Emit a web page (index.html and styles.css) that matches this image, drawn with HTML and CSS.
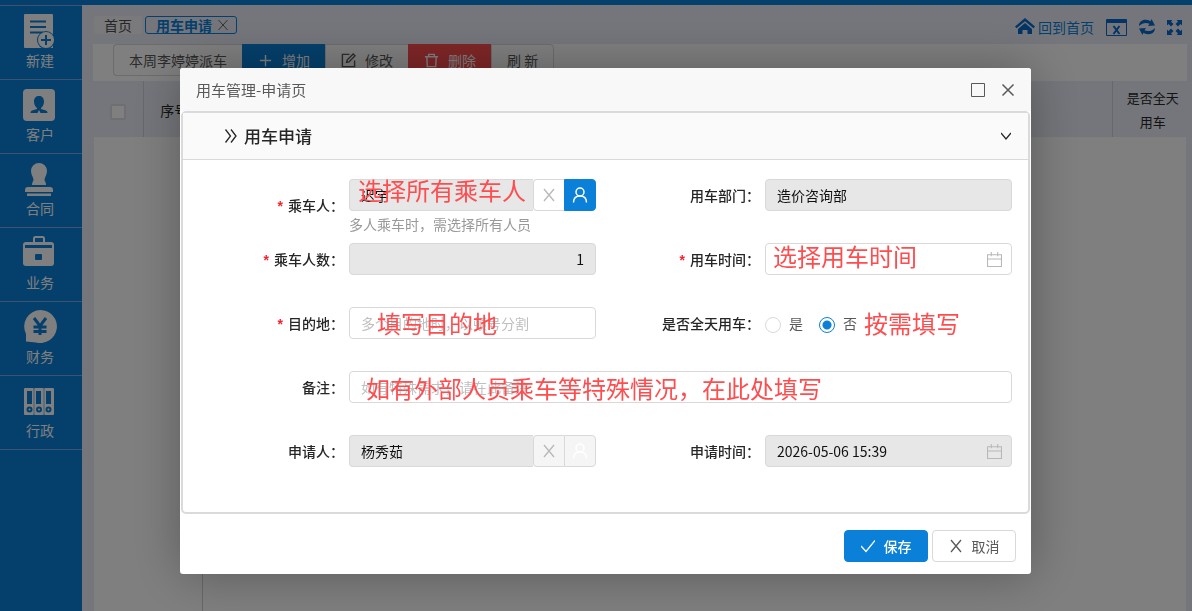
FILE: index.html
```html
<!DOCTYPE html>
<html lang="zh-CN">
<head>
    <meta charset="UTF-8">
    <title>用车管理-申请页</title>
    <link rel="stylesheet" href="styles.css">
</head>
<body>
    <div class="app">
        <div class="topbar"></div>
        <div class="app-body">
            <nav class="sidebar">
                <a class="side-item" href="#new">
                    <svg viewBox="0 0 34 34">
                        <path class="fill" d="M2 0h27a1 1 0 0 1 1 1v33H2a1 1 0 0 1-1-1V1a1 1 0 0 1 1-1z"/>
                        <path class="cut-line" d="M7 7.500h16M7 13h16M7 18.500h13"/>
                        <circle class="cut" cx="23" cy="26" r="9"/>
                        <circle class="fill" cx="23" cy="26" r="8"/>
                        <path class="cut-line" d="M18 26h10M23 21v10"/>
                    </svg>
                    <span>新建</span>
                </a>
                <a class="side-item" href="#customer">
                    <svg viewBox="0 0 34 34">
                        <rect class="fill" x="0" y="1" width="32" height="32" rx="4"/>
                        <path class="cut" d="M16 8c3 0 5 2 5 5.500 0 3-1.500 5.500-3 6.500v1l5 1.500c1 .5 1.500 1.500 1.500 2.500h-7l-1.500-3-1.500 3h-7c0-1 .5-2 1.500-2.500l5-1.500v-1c-1.500-1-3-3.500-3-6.500C11 10 13 8 16 8z"/>
                    </svg>
                    <span>客户</span>
                </a>
                <a class="side-item" href="#contract">
                    <svg viewBox="0 0 34 34">
                        <path class="fill" d="M16 1a8 8 0 0 1 8 8c0 4-2.500 6-2.500 9 0 1 1.500 2 1.500 5H9c0-3 1.500-4 1.500-5 0-3-2.500-5-2.500-9a8 8 0 0 1 8-8z"/>
                        <path class="fill" d="M5 25h22a3 3 0 0 1 3 3v2H2v-2a3 3 0 0 1 3-3zM4 31.500h24v2.500H4z"/>
                    </svg>
                    <span>合同</span>
                </a>
                <a class="side-item" href="#business">
                    <svg viewBox="0 0 34 34">
                        <path class="edge" d="M11 6V2.500a1.500 1.500 0 0 1 1.500-1.500h7A1.500 1.500 0 0 1 21 2.500V6"/>
                        <rect class="fill" x="0" y="6" width="31" height="24" rx="3"/>
                        <path class="cut" d="M2 9h27v3H2z"/>
                        <rect class="cut" x="12" y="18" width="7" height="6" rx="1"/>
                    </svg>
                    <span>业务</span>
                </a>
                <a class="side-item" href="#finance">
                    <svg viewBox="0 0 34 34">
                        <path class="fill" d="M17.500 0a16.500 16.500 0 1 1-4.500 32.400L3 31.500V24A16.500 16.500 0 0 1 17.500 0z"/>
                        <path class="cut-line bold" d="M11 8l6 8 6-8M17 16v9M10.500 17h13M10.500 21.500h13"/>
                    </svg>
                    <span>财务</span>
                </a>
                <a class="side-item" href="#admin">
                    <svg viewBox="0 0 34 34">
                        <rect class="fill" x="1" y="4" width="10" height="27" rx="1"/>
                        <rect class="fill" x="11" y="4" width="10" height="27" rx="1"/>
                        <rect class="fill" x="21" y="4" width="10" height="27" rx="1"/>
                        <path class="cut" d="M4 7h5v13H4zM13 7h5v13h-5zM23 7h5v13h-5z"/>
                        <path class="cut-line thin" d="M11 4v27M21 4v27"/>
                        <circle class="cut-line" cx="6.500" cy="25.500" r="2"/>
                        <circle class="cut-line" cx="16" cy="25.500" r="2"/>
                        <circle class="cut-line" cx="25.500" cy="25.500" r="2"/>
                    </svg>
                    <span>行政</span>
                </a>
            </nav>

            <main class="workspace">
                <header class="tab-row">
                    <div class="tabs">
                        <a class="tab" href="#home">首页</a>
                        <a class="tab active" href="#car">用车申请
                            <svg class="tab-close" viewBox="0 0 12 12"><path d="M1.500 1l9 10M10.500 1l-9 10"/></svg>
                        </a>
                    </div>
                    <div class="quick-links">
                        <a href="#home">
                            <svg class="home" viewBox="0 0 20 18">
                                <path d="M10 0l10 8.500-1.500 1.700L10 3.200 1.500 10.200 0 8.500z"/>
                                <path d="M10 5l7 6v5h-4.500v-4h-5v4H3v-5z"/>
                            </svg>
                            回到首页
                        </a>
                        <button type="button" aria-label="关闭页面">
                            <svg class="window" viewBox="0 0 21 17">
                                <path fill-rule="evenodd" d="M1 0h19a1 1 0 0 1 1 1v15a1 1 0 0 1-1 1H1a1 1 0 0 1-1-1V1a1 1 0 0 1 1-1zM1 4v12h19V4z"/>
                                <path class="stroke" d="M7.500 7l6 8M13.500 7l-6 8"/>
                            </svg>
                        </button>
                        <button type="button" aria-label="刷新页面">
                            <svg class="sync" viewBox="0 0 16 16">
                                <path d="M0 7C0 3 3 .5 7 .8c2 .1 3.500.7 4.500 1.400L12.500 0 16 6.500 9 7l1.500-2.300C7.500 3.300 3.500 3.500 0 7zM16 9c0 4-3 6.500-7 6.200-2-.1-3.500-.7-4.500-1.400L3.500 16 0 9.500 7 9l-1.500 2.300C8.500 12.700 12.500 12.500 16 9z"/>
                            </svg>
                        </button>
                        <button type="button" aria-label="全屏">
                            <svg class="full" viewBox="0 0 15 15">
                                <path d="M0 0h5.500L4 1.500l2.500 2.500L4 6.500 1.500 4 0 5.500zM15 0v5.500L13.500 4 11 6.500 8.500 4 11 1.500 9.500 0zM0 15V9.500L1.500 11 4 8.500 6.500 11 4 13.500 5.500 15zM15 15H9.500l1.500-1.500L8.500 11 11 8.500l2.500 2.500L15 9.500z"/>
                            </svg>
                        </button>
                    </div>
                </header>

                <div class="toolbar">
                    <button type="button" class="tool">本周李婷婷派车</button>
                    <button type="button" class="tool blue">
                        <svg viewBox="0 0 16 16"><path d="M2 8h12M8 2v12"/></svg>增加
                    </button>
                    <button type="button" class="tool">
                        <svg viewBox="0 0 16 16"><path d="M9 1.500H1.500v13h13V8M6 10l.5-2.500L13 1l2 2-6.500 6.500z"/></svg>修改
                    </button>
                    <button type="button" class="tool red">
                        <svg viewBox="0 0 16 16"><path d="M1 4h14M3 4l.5 10.500h9L13 4M5 4V1.500h6V4"/></svg>删除
                    </button>
                    <button type="button" class="tool last">刷 新</button>
                </div>

                <table class="grid">
                    <thead>
                        <tr>
                            <th class="check-col"><input type="checkbox" aria-label="全选"></th>
                            <th class="index-col">序号</th>
                            <th></th>
                            <th class="day-col">是否全天用车</th>
                        </tr>
                    </thead>
                </table>
                <div class="grid-body"><div class="fixed-col"></div></div>
            </main>
        </div>
    </div>

    <div class="mask">
        <form class="modal" role="dialog" aria-labelledby="modalTitle">
            <header class="modal-head">
                <h1 id="modalTitle">用车管理-申请页</h1>
                <button type="button" aria-label="最大化">
                    <svg viewBox="0 0 14 14"><path d="M.5.500h13v13H.500z"/></svg>
                </button>
                <button type="button" aria-label="关闭">
                    <svg viewBox="0 0 14 14"><path class="heavy" d="M1.500 1.500l11 11M12.500 1.500l-11 11"/></svg>
                </button>
            </header>

            <section class="panel">
                <header class="panel-head">
                    <svg class="chevrons" viewBox="0 0 14 14"><path d="M1.500 .500l5 6.500-5 6.500M7 .500l5 6.500-5 6.500"/></svg>
                    <h2>用车申请</h2>
                    <button type="button" aria-label="收起">
                        <svg viewBox="0 0 10 10"><path d="M0 2l5 6 5-6"/></svg>
                    </button>
                </header>

                <div class="form-grid">
                    <label class="label required with-help" for="rider">乘车人：</label>
                    <div class="field">
                        <div class="picker">
                            <input class="input" id="rider" type="text" value="迟宇" readonly>
                            <button type="button" class="clear" aria-label="清除乘车人">
                                <svg viewBox="0 0 12 14"><path d="M1 1l10 12M11 1L1 13"/></svg>
                            </button>
                            <button type="button" class="choose" aria-label="选择乘车人">
                                <svg viewBox="0 0 16 16"><circle cx="8" cy="5" r="4"/><path d="M1.500 15.500C1.500 11.500 4 9 8 9s6.500 2.500 6.500 6.500"/></svg>
                            </button>
                        </div>
                        <p class="help">多人乘车时，需选择所有人员</p>
                        <span class="note note-rider">选择所有乘车人</span>
                    </div>

                    <label class="label" for="dept">用车部门：</label>
                    <div class="field">
                        <input class="input" id="dept" type="text" value="造价咨询部" readonly>
                    </div>

                    <label class="label required" for="count">乘车人数：</label>
                    <div class="field">
                        <input class="input number" id="count" type="text" value="1" readonly>
                    </div>

                    <label class="label required" for="useTime">用车时间：</label>
                    <div class="field">
                        <div class="date">
                            <input class="input" id="useTime" type="text">
                            <svg viewBox="0 0 14 14"><path d="M.500 2.500h13v11H.500zM.500 6.500h13M4 0v4M10 0v4"/></svg>
                        </div>
                        <span class="note note-time">选择用车时间</span>
                    </div>

                    <label class="label required" for="dest">目的地：</label>
                    <div class="field">
                        <input class="input" id="dest" type="text" placeholder="多个目的地时，以顿号分割">
                        <span class="note note-dest">填写目的地</span>
                    </div>

                    <span class="label" id="dayLabel">是否全天用车：</span>
                    <div class="field radios" role="radiogroup" aria-labelledby="dayLabel">
                        <label><input type="radio" name="allday" value="1">是</label>
                        <label><input type="radio" name="allday" value="0" checked>否</label>
                        <span class="note note-day">按需填写</span>
                    </div>

                    <label class="label" for="remark">备注：</label>
                    <div class="field wide">
                        <input class="input" id="remark" type="text" placeholder="如有特殊需求，请在此备注">
                        <span class="note note-remark">如有外部人员乘车等特殊情况，在此处填写</span>
                    </div>

                    <label class="label" for="applicant">申请人：</label>
                    <div class="field">
                        <div class="picker">
                            <input class="input" id="applicant" type="text" value="杨秀茹" readonly>
                            <button type="button" class="clear" aria-label="清除申请人" disabled>
                                <svg viewBox="0 0 12 14"><path d="M1 1l10 12M11 1L1 13"/></svg>
                            </button>
                            <button type="button" class="choose" aria-label="选择申请人" disabled>
                                <svg viewBox="0 0 16 16"><circle cx="8" cy="5" r="4"/><path d="M1.500 15.500C1.500 11.500 4 9 8 9s6.500 2.500 6.500 6.500"/></svg>
                            </button>
                        </div>
                    </div>

                    <label class="label" for="applyTime">申请时间：</label>
                    <div class="field">
                        <div class="date">
                            <input class="input" id="applyTime" type="text" value="2026-05-06 15:39" readonly>
                            <svg viewBox="0 0 14 14"><path d="M.500 2.500h13v11H.500zM.500 6.500h13M4 0v4M10 0v4"/></svg>
                        </div>
                    </div>
                </div>
            </section>

            <footer class="modal-foot">
                <button type="submit" class="btn primary">
                    <svg viewBox="0 0 14 14"><path d="M0 7l5 5.500L14 1.500"/></svg>保存
                </button>
                <button type="button" class="btn">
                    <svg viewBox="0 0 14 14"><path d="M2 1l10 12M12 1L2 13"/></svg>取消
                </button>
            </footer>
        </form>
    </div>
</body>
</html>
```

FILE: styles.css
```css
:root {
    --blue: #0a80d8;
    --red: #ff4d4f;
    --line: #d9d9d9;
    --back: #eaedf6;
}

* {
    box-sizing: border-box;
}

body {
    margin: 0;
    font-family: "Noto Sans CJK SC", sans-serif;
    font-size: 14px;
    line-height: 20px;
    color: #262626;
    overflow: hidden;
}

button,
input {
    font: inherit;
    color: inherit;
}

button {
    padding: 0;
    border: none;
    background: none;
    cursor: pointer;
}

a {
    color: inherit;
    text-decoration: none;
}

h1,
h2,
p {
    margin: 0;
}

svg {
    flex: none;
    fill: none;
    stroke: currentColor;
}

/* Page behind the dialog */
.app {
    height: 100vh;
    display: flex;
    flex-direction: column;
    background: var(--back);
}

.topbar {
    height: 5px;
    flex: none;
    background: var(--blue);
}

.app-body {
    flex: 1;
    display: flex;
}

.sidebar {
    width: 82px;
    flex: none;
    background: var(--blue);
    border-top: 1px solid #7ba6e0;
}

.side-item {
    display: flex;
    flex-direction: column;
    align-items: center;
    gap: 2px;
    height: 74px;
    padding: 8px 2px 0 0;
    border-bottom: 1px solid #7ba6e0;
    color: #fff;
}

.side-item svg {
    width: 34px;
    height: 34px;
    stroke: none;
}

.side-item .fill {
    fill: #fff;
}

.side-item .cut {
    fill: var(--blue);
}

.side-item .cut-line {
    stroke: var(--blue);
    stroke-width: 2;
}

.side-item .bold {
    stroke-width: 3;
}

.side-item .thin {
    stroke-width: 1;
    opacity: 0.5;
}

.side-item .edge {
    stroke: #fff;
    stroke-width: 2;
}

.workspace {
    flex: 1;
    min-width: 0;
    display: flex;
    flex-direction: column;
    padding: 0 5px 0 11px;
}

.tab-row {
    height: 39px;
    flex: none;
    display: flex;
    justify-content: space-between;
    align-items: flex-start;
    padding: 11px 5px 0 1px;
}

.tabs {
    display: flex;
    gap: 3px;
}

.tab {
    display: flex;
    align-items: center;
    height: 18px;
    padding: 0 10px;
    border-radius: 3px;
    background: #f4f5f8;
    color: #4c4c4c;
}

.tab.active {
    gap: 5px;
    padding: 0 7px 0 10px;
    border: 1px solid var(--blue);
    background: none;
    color: var(--blue);
    font-weight: 700;
}

.tab-close {
    width: 12px;
    height: 12px;
    color: #666;
}

.quick-links {
    display: flex;
    align-items: center;
    gap: 12px;
    height: 22px;
    color: var(--blue);
}

.quick-links a {
    display: flex;
    align-items: center;
    gap: 3px;
}

.quick-links button {
    display: flex;
}

.quick-links svg {
    fill: #0869c8;
    stroke: none;
}

.quick-links .stroke {
    stroke: #0869c8;
    stroke-width: 2;
}

.home {
    width: 20px;
    height: 18px;
}

.window {
    width: 21px;
    height: 17px;
}

.sync {
    width: 16px;
    height: 16px;
}

.full {
    width: 15px;
    height: 15px;
}

.toolbar {
    flex: none;
    display: flex;
    height: 37px;
    padding-left: 20px;
    background: #fff;
}

.tool {
    display: flex;
    align-items: center;
    gap: 9px;
    height: 32px;
    padding: 0 15px;
    border: 1px solid var(--line);
    border-right: none;
    color: #595959;
}

.tool:first-child {
    border-radius: 4px 0 0 4px;
}

.tool.last {
    border-right: 1px solid var(--line);
    border-radius: 0 4px 4px 0;
}

.tool svg {
    width: 15px;
    height: 15px;
    stroke-width: 1.500;
}

.tool.blue,
.tool.red {
    color: #fff;
}

.tool.blue {
    background: var(--blue);
    border-color: var(--blue);
}

.tool.red {
    background: var(--red);
    border-color: var(--red);
}

.grid {
    width: 100%;
    height: 56px;
    flex: none;
    table-layout: fixed;
    border-collapse: collapse;
}

.grid th {
    padding: 2px 10px 0 12px;
    font-weight: 400;
    line-height: 24px;
}

.grid .check-col {
    width: 50px;
    padding: 0 12px;
    border-right: 1px solid #cdd0d8;
}

.grid .index-col {
    width: 60px;
}

.grid .day-col {
    width: 75px;
    border-left: 1px solid #cdd0d8;
    padding: 2px 4px 0 10px;
    font-size: 13px;
}

.grid input {
    display: block;
    appearance: none;
    width: 16px;
    height: 16px;
    margin: 6px auto 0;
    border: 2px solid #dcdfe6;
    border-radius: 2px;
    background: #fff;
}

.grid-body {
    flex: 1;
    margin: 0 1px;
    background: #fff;
}

.fixed-col {
    width: 109px;
    height: 100%;
    border-right: 1px solid #d0d0d0;
}

/* Dialog */
.mask {
    position: fixed;
    inset: 0;
    display: flex;
    align-items: flex-start;
    padding: 68px 161px 0 180px;
    background: rgba(0, 0, 0, 0.5);
}

.modal {
    flex: 1;
    min-width: 0;
    border-radius: 3px;
    background: #fff;
    box-shadow: 1px 1px 50px rgba(0, 0, 0, 0.3);
}

.modal-head {
    display: flex;
    align-items: center;
    gap: 16px;
    height: 43px;
    padding: 0 16px;
    border-radius: 3px 3px 0 0;
    background: #f8f8f8;
    color: #595959;
}

.modal-head h1 {
    flex: 1;
    font-size: 15px;
    font-weight: 400;
}

.modal-head svg {
    display: block;
    width: 14px;
    height: 14px;
}

.modal-head .heavy {
    stroke-width: 1.500;
}

.panel {
    margin: 0 1px;
    border: 2px solid #dadadc;
    border-radius: 5px;
}

.panel-head {
    display: flex;
    align-items: center;
    gap: 6px;
    height: 47px;
    padding: 0 17px 0 41px;
    border-bottom: 1px solid var(--line);
    background: #fafafa;
}

.panel-head h2 {
    flex: 1;
    font-size: 17px;
    font-weight: 500;
}

.panel-head svg {
    display: block;
    width: 10px;
    height: 10px;
    stroke-width: 1.300;
}

.panel-head .chevrons {
    width: 14px;
    height: 14px;
}

.form-grid {
    display: grid;
    grid-template-columns: 166px 1fr 169px 1fr;
    grid-auto-rows: 64px;
    padding: 19px 16px 13px 0;
}

.label {
    padding-right: 5px;
    line-height: 32px;
    font-weight: 500;
    text-align: right;
}

.label.with-help {
    padding-top: 10px;
}

.label.required::before {
    content: "*";
    margin-right: 5px;
    color: #f5222d;
    font-family: "Liberation Sans", sans-serif;
    font-weight: 700;
}

.field {
    position: relative;
    min-width: 0;
}

.field.wide {
    grid-column: span 3;
}

.input {
    display: block;
    width: 100%;
    height: 32px;
    padding: 0 11px;
    border: 1px solid var(--line);
    border-radius: 4px;
    background: #fff;
    color: #111;
}

.input:read-only {
    background: #e7e7e7;
}

.input::placeholder {
    color: #bfbfbf;
}

.input.number {
    text-align: right;
}

.picker {
    display: flex;
}

.picker .input {
    flex: 1;
    min-width: 0;
    border-right: none;
    border-radius: 4px 0 0 4px;
}

.picker button {
    display: flex;
    align-items: center;
    justify-content: center;
    height: 32px;
    border: 1px solid var(--line);
}

.picker .clear {
    width: 31px;
    border-right: none;
    border-radius: 4px 0 0 4px;
    background: #fff;
    color: #b8b8b8;
}

.picker .choose {
    width: 32px;
    border-color: var(--blue);
    border-radius: 0 4px 4px 0;
    background: var(--blue);
    color: #fff;
}

.picker button:disabled {
    background: #f5f5f5;
    border-color: var(--line);
}

.picker .clear svg {
    width: 12px;
    height: 14px;
    stroke-width: 1.300;
}

.picker .choose svg {
    width: 16px;
    height: 16px;
    stroke-width: 1.500;
}

.help {
    padding-top: 2px;
    line-height: 22px;
    color: #999;
}

.date {
    position: relative;
}

.date svg {
    position: absolute;
    top: 9px;
    right: 10px;
    width: 15px;
    height: 15px;
    color: #b8b8b8;
}

.radios {
    display: flex;
    height: 32px;
    gap: 16px;
}

.radios label {
    display: flex;
    align-items: center;
    gap: 8px;
    color: #595959;
}

.radios input {
    appearance: none;
    width: 16px;
    height: 16px;
    margin: 4px 0 0;
    border: 1px solid var(--line);
    border-radius: 50%;
}

.radios input:checked {
    border-color: var(--blue);
    background: radial-gradient(circle, var(--blue) 4px, #fff 5px);
}

/* Red guide notes lying over the fields */
.note {
    position: absolute;
    color: var(--red);
    font-size: 24px;
    line-height: 32px;
    white-space: nowrap;
    pointer-events: none;
}

.note-rider {
    top: -5px;
    left: 9px;
}

.note-time {
    top: -3px;
    left: 8px;
}

.note-dest {
    top: 0;
    left: 28px;
}

.note-day {
    top: 0;
    left: 99px;
}

.note-remark {
    top: 1px;
    left: 17px;
}

.modal-foot {
    display: flex;
    justify-content: flex-end;
    gap: 4px;
    padding: 16px 15px 12px;
}

.btn {
    display: flex;
    align-items: center;
    justify-content: center;
    gap: 9px;
    width: 84px;
    height: 32px;
    border: 1px solid var(--line);
    border-radius: 4px;
    background: #fff;
    color: #595959;
}

.btn svg {
    width: 14px;
    height: 14px;
    stroke-width: 1.300;
}

.btn.primary {
    border-color: var(--blue);
    background: var(--blue);
    color: #fff;
    font-weight: 500;
}
```
